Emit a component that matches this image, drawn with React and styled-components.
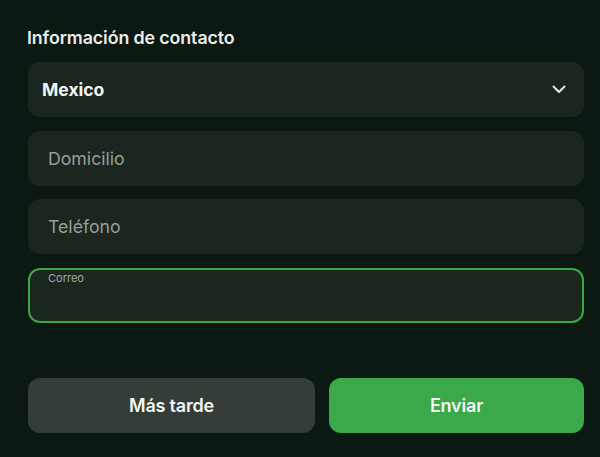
import React from "react";
import styled, { createGlobalStyle } from "styled-components";

const Global = createGlobalStyle`
  html, body { margin: 0; padding: 0; background: #0c1812; }
  body { font-family: Inter, "Noto Sans", sans-serif; -webkit-font-smoothing: antialiased; }
`;

const Page = styled.div`
  width: 600px;
  height: 457px;
  box-sizing: border-box;
  background: #0c1812;
  padding: 27px 16px 0 28px;
  display: flex;
  flex-direction: column;
`;

const Title = styled.h2`
  margin: 0 0 13px -1px;
  font-size: 17.8px;
  font-weight: 600;
  line-height: 22px;
  color: #e9ede9;
  letter-spacing: -0.1px;
`;

const Fields = styled.div`
  display: flex;
  flex-direction: column;
  gap: 13.7px;
`;

const Field = styled.div`
  box-sizing: border-box;
  height: 55px;
  border-radius: 12px;
  background: #1b261f;
  border: ${(p) => (p.$active ? "2px solid #3aa845" : "none")};
  display: flex;
  align-items: center;
  justify-content: space-between;
  padding: ${(p) => (p.$active ? "0 18px" : "0 20px")};
  position: relative;
`;

const Value = styled.span`
  font-size: 17.5px;
  font-weight: 700;
  color: #f2f4f2;
  margin-left: -6px;
`;

const Placeholder = styled.span`
  font-size: 17.7px;
  font-weight: 400;
  color: #979e99;
`;

const FloatLabel = styled.span`
  position: absolute;
  left: 18px;
  top: 1px;
  font-size: 11px;
  color: #a3aaa5;
`;

const Buttons = styled.div`
  display: grid;
  grid-template-columns: 287px 255px;
  gap: 14px;
  margin-top: 55px;
`;

const Button = styled.button`
  height: 55px;
  border: none;
  border-radius: 12px;
  background: ${(p) => (p.$primary ? "#3ba84a" : "#343d38")};
  color: #f4f6f4;
  font-family: Inter, "Noto Sans", sans-serif;
  font-size: 18px;
  font-weight: 600;
  letter-spacing: -0.2px;
  cursor: pointer;
`;

const Chevron = () => (
  <svg width="14" height="9" viewBox="0 0 14 9" style={{ marginRight: -2 }}>
    <path d="M1.5 1.5 L7 7 L12.5 1.5" fill="none" stroke="#e9ede9" strokeWidth="2" strokeLinecap="round" strokeLinejoin="round" />
  </svg>
);

export default function App() {
  return (
    <>
      <Global />
      <Page>
        <Title>Información de contacto</Title>
        <Fields>
          <Field>
            <Value>Mexico</Value>
            <Chevron />
          </Field>
          <Field>
            <Placeholder>Domicilio</Placeholder>
          </Field>
          <Field>
            <Placeholder>Teléfono</Placeholder>
          </Field>
          <Field $active>
            <FloatLabel>Correo</FloatLabel>
          </Field>
        </Fields>
        <Buttons>
          <Button>Más tarde</Button>
          <Button $primary>Enviar</Button>
        </Buttons>
      </Page>
    </>
  );
}
